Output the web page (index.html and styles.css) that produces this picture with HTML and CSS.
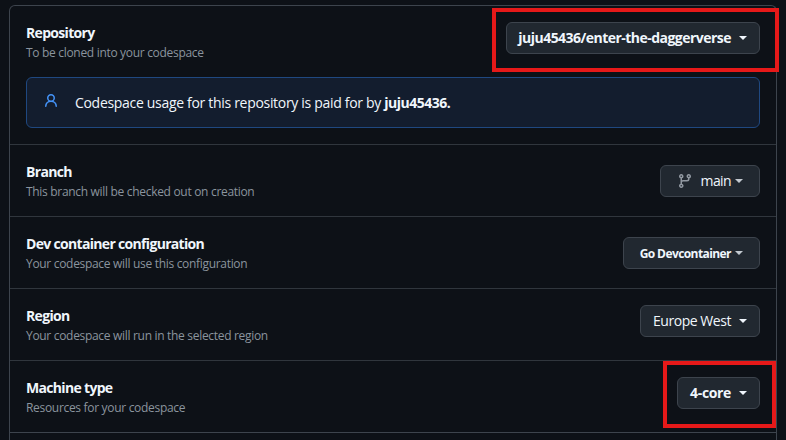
FILE: index.html
```
<!DOCTYPE html>
<html lang="en">
<head>
<meta charset="utf-8">
<title>Create codespace</title>
<link rel="stylesheet" href="styles.css">
</head>
<body>
<main class="panel">
  <section class="row row-repo">
    <div class="row-head">
      <div class="label"><h2>Repository</h2><p>To be cloned into your codespace</p></div>
      <button class="btn btn-repo"><b>juju45436/enter-the-daggerverse</b><i class="caret"></i></button>
    </div>
    <div class="notice">
      <svg width="16" height="16" viewBox="0 0 16 16"><path d="M10.561 8.073a6.005 6.005 0 0 1 3.432 5.142.75.75 0 1 1-1.498.07 4.5 4.5 0 0 0-8.99 0 .75.75 0 0 1-1.498-.07 6.004 6.004 0 0 1 3.431-5.142 3.999 3.999 0 1 1 5.123 0ZM10.5 5a2.5 2.5 0 1 0-5 0 2.5 2.5 0 0 0 5 0Z"/></svg>
      <p>Codespace usage for this repository is paid for by <b>juju45436.</b></p>
    </div>
  </section>
  <section class="row">
    <div class="label"><h2>Branch</h2><p>This branch will be checked out on creation</p></div>
    <button class="btn btn-branch"><svg width="16" height="16" viewBox="0 0 16 16"><path d="M9.5 3.25a2.25 2.25 0 1 1 3 2.122V6A2.5 2.5 0 0 1 10 8.5H6a1 1 0 0 0-1 1v1.128a2.251 2.251 0 1 1-1.5 0V5.372a2.25 2.25 0 1 1 1.5 0v1.836A2.493 2.493 0 0 1 6 7h4a1 1 0 0 0 1-1v-.628A2.25 2.25 0 0 1 9.5 3.25Zm-6 0a.75.75 0 1 0 1.5 0 .75.75 0 0 0-1.5 0Zm8.25-.75a.75.75 0 1 0 0 1.5.75.75 0 0 0 0-1.5ZM4.25 12a.75.75 0 1 0 0 1.5.75.75 0 0 0 0-1.5Z"/></svg><span>main</span><i class="caret caret-dim"></i></button>
  </section>
  <section class="row">
    <div class="label"><h2>Dev container configuration</h2><p>Your codespace will use this configuration</p></div>
    <button class="btn btn-dev"><b>Go Devcontainer</b><i class="caret caret-dim"></i></button>
  </section>
  <section class="row">
    <div class="label"><h2>Region</h2><p>Your codespace will run in the selected region</p></div>
    <button class="btn btn-region"><span>Europe West</span><i class="caret"></i></button>
  </section>
  <section class="row">
    <div class="label"><h2>Machine type</h2><p>Resources for your codespace</p></div>
    <button class="btn btn-machine"><b>4-core</b><i class="caret"></i></button>
  </section>
  <div class="row-next"></div>
</main>
<div class="mark mark-repo"></div>
<div class="mark mark-machine"></div>
</body>
</html>
```
FILE: styles.css
```
* { box-sizing: border-box; }
body {
  margin: 0;
  height: 440px;
  overflow: hidden;
  position: relative;
  background: #0d1117;
  color: #f0f6fc;
  font: 14px/21px "Open Sans", "Noto Sans", sans-serif;
  padding: 5px 9px 0;
}
h2, p { margin: 0; white-space: nowrap; }
b { font-weight: 700; }
.panel {
  height: 435px;
  border: 1px solid #3d444d;
  border-bottom: 0;
  border-radius: 6px 6px 0 0;
}
.row {
  height: 72px;
  border-top: 1px solid #30363d;
  padding: 16px;
  display: flex;
  justify-content: space-between;
}
.row-next { border-top: 1px solid #3d444d; }
.row-repo {
  display: block;
  height: 138px;
  border-top: 0;
}
.row-head { display: flex; justify-content: space-between; height: 55px; }
.label { width: 300px; }
.label h2 { font-size: 14px; font-weight: 700; line-height: 22px; letter-spacing: -.68px; }
.label p { width: max-content; font-size: 12px; line-height: 18px; color: #8b949e; letter-spacing: -.31px; }
.btn {
  height: 32px;
  margin-top: 4px;
  padding: 0 12px 0 0;
  display: flex;
  align-items: center;
  justify-content: flex-end;
  border: 1px solid #3d444d;
  border-radius: 6px;
  background: #212830;
  color: #f0f6fc;
  font: 14px/20px "Open Sans", "Noto Sans", sans-serif;
  white-space: nowrap;
}
.btn-repo { width: 254px; margin-top: 0; letter-spacing: -.53px; }
.btn-branch { width: 100px; padding-right: 16px; letter-spacing: -.6px; }
.btn-dev { width: 137px; padding-right: 16px; font-size: 12px; letter-spacing: -.58px; }
.btn-dev b { position: relative; top: 1px; }
.btn-region { width: 120px; margin-top: 0; letter-spacing: -.45px; }
.btn-machine { width: 83px; margin-top: 0; letter-spacing: -.35px; }
.btn svg { fill: #9198a1; margin-right: 8px; }
.caret {
  border: 4px solid transparent;
  border-top-color: #f0f6fc;
  border-bottom: 0;
  margin-left: 8px;
}
.caret-dim { border-top-color: #c3c9d0; margin-left: 4px; }
.notice {
  height: 51px;
  border: 1px solid #1f4880;
  border-radius: 6px;
  background: #131d2e;
  display: flex;
  align-items: center;
  padding-left: 16px;
  letter-spacing: -.31px;
}
.notice b { letter-spacing: -.5px; }
.notice svg { fill: #4493f8; margin: -3px 16px 0 0; }
.mark { position: absolute; border: 4px solid #e61919; }
.mark-repo { left: 492px; top: 8px; width: 287px; height: 64px; }
.mark-machine { left: 663px; top: 361px; width: 113px; height: 67px; }
```
